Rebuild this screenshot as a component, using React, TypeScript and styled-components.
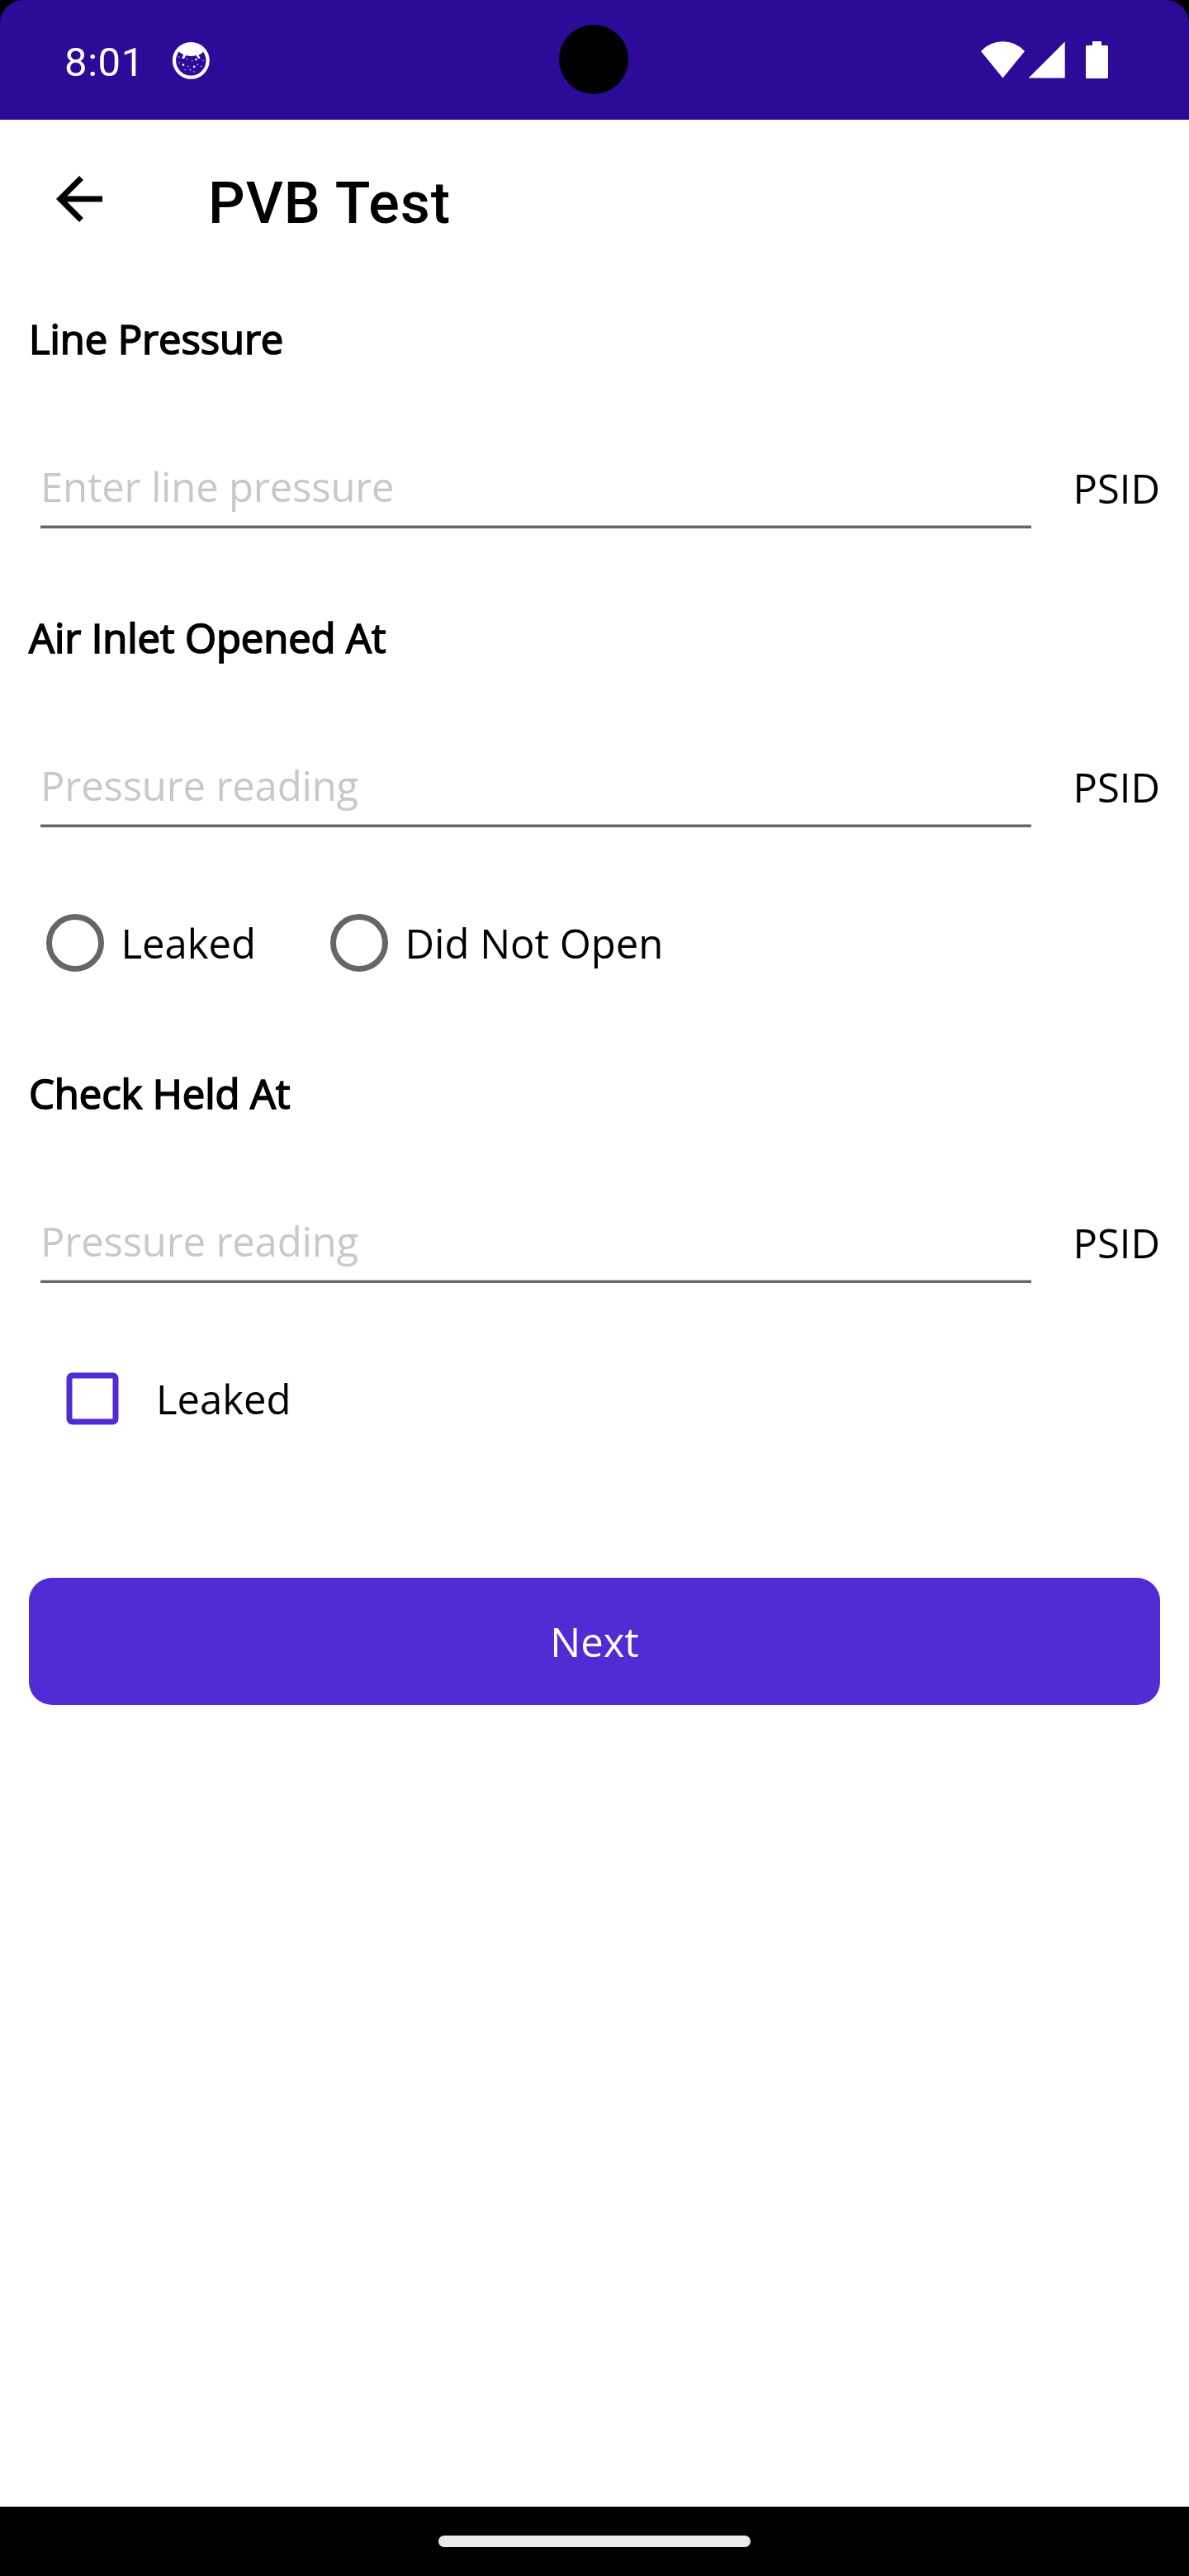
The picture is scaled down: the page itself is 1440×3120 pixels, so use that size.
import React from 'react';
import styled, { createGlobalStyle } from 'styled-components';

const GlobalStyle = createGlobalStyle`
  * { box-sizing: border-box; }
  body { margin: 0; background: #000; }
`;

const Screen = styled.div`
  width: 1440px;
  height: 3120px;
  display: flex;
  flex-direction: column;
  overflow: hidden;
  background: #000;
  color: #000;
  font-family: 'Open Sans', 'Noto Sans', sans-serif;
  font-size: 49px;
  line-height: 66px;
`;

const StatusBar = styled.header`
  position: relative;
  height: 145px;
  flex: none;
  display: flex;
  align-items: flex-start;
  justify-content: space-between;
  padding: 45px 98px 0 78px;
  border-radius: 28px 28px 0 0;
  background: #2b0b98;
  color: #fff;
`;

const StatusGroup = styled.div`
  display: flex;
  align-items: flex-start;
`;

const Clock = styled.span`
  margin-top: 2px;
  font-family: Roboto, sans-serif;
  font-size: 49px;
  line-height: 57px;
  letter-spacing: 0.6px;
  width: 126px;
`;

const FaceIcon = styled.svg`
  width: 56px;
  height: 56px;
`;

const SystemIcons = styled.svg`
  width: 154px;
  height: 46px;
  margin-top: 5px;
`;

const Camera = styled.div`
  position: absolute;
  left: 677px;
  top: 30px;
  width: 84px;
  height: 84px;
  border-radius: 50%;
  background: #000;
`;

const Toolbar = styled.div`
  height: 196px;
  flex: none;
  display: flex;
  align-items: flex-start;
  padding: 54px 54px 0;
  background: #fff;
`;

const BackIcon = styled.svg`
  width: 84px;
  height: 84px;
`;

const Title = styled.h1`
  margin: 6px 0 0 114px;
  font-family: Roboto, sans-serif;
  font-size: 70px;
  font-weight: 500;
  line-height: 82px;
  letter-spacing: 1px;
`;

const Form = styled.main`
  flex: 1;
  display: flex;
  flex-direction: column;
  padding: 36px 35px 0;
  background: #fff;
`;

const Heading = styled.h2`
  margin: 0;
  font-size: 49px;
  font-weight: 400;
  line-height: 66px;
  letter-spacing: -0.1px;
  -webkit-text-stroke: 1.7px #000;
`;

const FieldRow = styled.div`
  display: flex;
  justify-content: space-between;
  margin-top: 113px;
  height: 84px;
  padding-left: 14px;
`;

const Field = styled.div`
  width: 1200px;
  height: 84px;
  letter-spacing: -0.18px;
  color: #c8c8c8;
  background: linear-gradient(#b4b4b4 0 1px, #666 1px 4px) bottom / 100% 4px no-repeat;
`;

const Unit = styled.span`
  padding-top: 2px;
`;

const Section = styled.section<{ $gap?: number }>`
  margin-top: ${(p) => p.$gap ?? 0}px;
`;

const RadioRow = styled.div`
  display: flex;
  margin: 105px 0 0 21px;
`;

const RadioOption = styled.label<{ $width: number }>`
  display: flex;
  width: ${(p) => p.$width}px;
  height: 70px;
  padding-top: 2px;
  white-space: nowrap;
`;

const RadioRing = styled.span`
  width: 70px;
  height: 70px;
  margin: -2px 20.5px 0 0;
  flex: none;
  border: 7px solid #666;
  border-radius: 50%;
`;

const CheckOption = styled.label`
  display: flex;
  height: 66px;
  margin: 107px 0 0 45px;
`;

const CheckIcon = styled.svg`
  width: 66px;
  height: 66px;
  margin-right: 43px;
`;

const NextButton = styled.button`
  height: 154px;
  margin-top: 184px;
  padding: 0;
  border: 0;
  border-radius: 28px;
  background: #512bd4;
  color: #fff;
  font: inherit;
`;

const NavBar = styled.footer`
  height: 84px;
  flex: none;
  display: flex;
  align-items: center;
  justify-content: center;
  background: #000;
`;

const NavPill = styled.div`
  width: 378px;
  height: 14px;
  border-radius: 7px;
  background: #ebebeb;
`;

const SPECKLES: [number, number, number][] = [
  [13, 24, 0.7], [13, 31, 0.7], [18, 33.6, 1.3], [24, 35.2, 0.7], [31.2, 35.8, 1.3],
  [20, 39.6, 0.7], [26.5, 39.6, 0.8], [31, 42, 0.7], [22, 26.5, 0.7], [28.6, 28.6, 0.7],
  [33.5, 27, 1.3], [35.4, 33.3, 0.7], [39.7, 35.4, 0.7], [42, 28.6, 0.7],
];

function PressureField({ placeholder }: { placeholder: string }) {
  return (
    <FieldRow>
      <Field>{placeholder}</Field>
      <Unit>PSID</Unit>
    </FieldRow>
  );
}

export default function App() {
  return (
    <Screen>
      <GlobalStyle />
      <StatusBar>
        <StatusGroup>
          <Clock>8:01</Clock>
          <FaceIcon viewBox="0 0 56 56">
            <circle cx="27.3" cy="28.3" r="20.3" fill="none" stroke="#fff" strokeWidth="4.2" />
            <path
              d="M12 17 Q18 7 27 7 Q37 7 43 17 L39 20.5 L36.5 21.5 L38.7 25.5 L36.3 26 L33.6 22 Q27.5 24 21.3 22 L19 26 L16.2 26 L18.2 21 L15 19.5 Z"
              fill="#fff"
            />
            {SPECKLES.map(([x, y, r], i) => (
              <circle key={i} cx={x} cy={y} r={r} fill="#fff" />
            ))}
          </FaceIcon>
        </StatusGroup>
        <Camera />
        <SystemIcons viewBox="1188 50 154 46" fill="#fff">
          <path d="M1188 62 Q1199 50.3 1214.5 50.3 Q1230 50.3 1241 62 L1214.5 94.5 Z" />
          <path d="M1289.7 50.5 V94.6 H1245.6 Z" />
          <path d="M1323 50 H1334 V55 H1341 L1342 56 V94 L1341 95 H1316 L1315 94 V56 L1316 55 H1323 Z" />
        </SystemIcons>
      </StatusBar>
      <Toolbar>
        <BackIcon viewBox="0 0 24 24">
          <path d="M20 11H7.83l5.59-5.59L12 4l-8 8 8 8 1.41-1.41L7.83 13H20v-2z" />
        </BackIcon>
        <Title>PVB Test</Title>
      </Toolbar>
      <Form>
        <Section>
          <Heading>Line Pressure</Heading>
          <PressureField placeholder="Enter line pressure" />
        </Section>
        <Section $gap={99}>
          <Heading>Air Inlet Opened At</Heading>
          <PressureField placeholder="Pressure reading" />
          <RadioRow>
            <RadioOption $width={344}>
              <RadioRing />
              Leaked
            </RadioOption>
            <RadioOption $width={420}>
              <RadioRing />
              Did Not Open
            </RadioOption>
          </RadioRow>
        </Section>
        <Section $gap={114}>
          <Heading>Check Held At</Heading>
          <PressureField placeholder="Pressure reading" />
          <CheckOption>
            <CheckIcon viewBox="0 0 66 66">
              <rect x="4" y="5" width="56" height="56" rx="3.5" fill="none" stroke="#512bd4" strokeWidth="7" />
            </CheckIcon>
            Leaked
          </CheckOption>
        </Section>
        <NextButton>Next</NextButton>
      </Form>
      <NavBar>
        <NavPill />
      </NavBar>
    </Screen>
  );
}
